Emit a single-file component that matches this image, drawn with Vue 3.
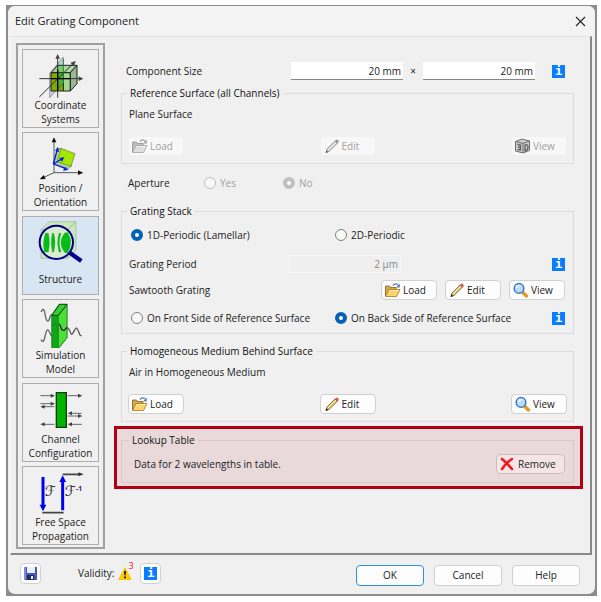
<template>
  <div class="window">
    <div class="dialog">
      <header class="titlebar">
        <span>Edit Grating Component</span>
        <button type="button" class="close" aria-label="Close">
          <svg width="11" height="11" viewBox="0 0 11 11"><path d="M1 1l9 9M10 1l-9 9" stroke="#222" stroke-width="1.1" /></svg>
        </button>
      </header>

      <div class="panel">
        <nav class="sidebar">
          <button v-for="page in pages" :key="page.id" type="button" class="page" :class="{ active: page.id === activePage }" @click="activePage = page.id">
            <svg class="page-icon" viewBox="0 0 144 135">
              <g v-if="page.id === 'coordinate'" fill="none" stroke="#222" stroke-width="3">
                <path d="M38 62L79 12V89L38 134z" fill="#c5cfe4" stroke="#70788c" stroke-width="2" />
                <path d="M79 59L100 59V114H79z" fill="#a5d894" />
                <path d="M42 59H79V114H42z" fill="#86a800" />
                <path d="M62 37L79 36V89L62 108z" fill="#4fae3c" stroke="none" />
                <path d="M42 59L62 37H120L100 59z" fill="#94cf85" fill-opacity=".75" />
                <path d="M100 59L120 37V92L100 114z" fill="#9ab78f" />
                <path d="M79 18V90L62 108" stroke="#1c8d22" stroke-width="3" />
                <path d="M62 134V10M7 77H134M7 132L112 28" stroke="#333" />
                <path d="M62 3l7 14H55zM139 77l-14-7v14zM116 24l-16 5 11 10z" fill="#444" stroke="none" />
                <path d="M42 77H100M62 50V114" stroke="#000" stroke-width="4" />
              </g>
              <g v-else-if="page.id === 'position'" fill="none" stroke="#222" stroke-width="2">
                <path d="M51 110V14M51 110H130M51 110L18 125" stroke="#555" stroke-width="3" />
                <path d="M51 4l7 15H44zM139 110l-16-7v14zM8 130l12-13 6 12z" fill="#111" stroke="none" />
                <path d="M72 37L62 38 50 82 94 98 104 90z" fill="#a8d694" stroke="#657b5a" />
                <path d="M72 37L114 53L102 91L60 77z" fill="#a4e600" stroke="#667c3a" />
                <path d="M49 84L60 43M49 84L74 69M49 84L86 98" stroke="#0018f0" stroke-width="4" />
                <path d="M63 32l3 16-12-4zM82 64L75 77l-8-11zM94 102l-16 2 6-11z" fill="#0018f0" stroke="none" />
              </g>
              <g v-else-if="page.id === 'structure'" fill="none">
                <path d="M12 29L36 5H117V90L92 115H12z" fill="#cde5bb" stroke="#9fb890" stroke-width="2" />
                <path d="M92 29H12M92 29L117 5M92 29V115" stroke="#8ea583" stroke-width="2" />
                <circle cx="58" cy="67" r="48" fill="#dcefd2" fill-opacity=".85" />
                <path d="M25 40H34Q40 68 34 96H22Q16 68 25 40zM46 40H50Q58 67 50 96H46Q40 67 46 40zM66 40H72Q62 68 72 96H66Q58 68 66 40zM84 38H92Q110 66 92 98H84Q60 68 84 38z" fill="#06bd18" stroke="#16962a" stroke-width="1" />
                <circle cx="58" cy="67" r="50" stroke="#00008b" stroke-width="6" />
                <path d="M96 97L133 123" stroke="#00008b" stroke-width="13" />
              </g>
              <g v-else-if="page.id === 'simulation'" fill="none">
                <path d="M12 27C20 12 22 20 25 38S34 60 38 45 46 36 52 40M12 110C20 124 22 108 26 92S34 78 39 91 46 94 50 96" stroke="#666" stroke-width="4" />
                <path d="M44 36L66 4H90V104L64 137H44z" fill="#11a51b" stroke="#176819" stroke-width="2" />
                <path d="M64 38L90 5V104L64 137z" fill="#4be036" stroke="#17741b" stroke-width="2" />
                <path d="M44 37H64L90 4H68z" fill="#39cf30" stroke="#104712" stroke-width="3" />
                <path d="M48 68Q54 56 60 70T64 84" stroke="#128018" stroke-width="2" />
                <path d="M66 62C73 68 70 82 79 82S89 68 96 79 101 101 109 88 117 68 124 84 128 98 134 98" stroke="#555" stroke-width="4" />
                <path d="M66 62C73 68 70 82 79 82S86 72 90 73" stroke="#111" stroke-width="3" />
              </g>
              <g v-else-if="page.id === 'channel'" fill="none" stroke="#666" stroke-width="3">
                <path d="M58 17H88V121H58z" fill="#00b400" stroke="#173b17" stroke-width="4" />
                <path d="M10 26H48M92 26H130M10 50H48M16 59H52M98 79H134M92 87H130M16 112H52M98 112H134" />
                <path d="M54 26l-13-6v12zM136 26l-13-6v12zM54 50l-13-6v12zM10 59l13-6v12zM92 79l13-6v12zM136 87l-13-6v12zM10 112l13-6v12zM92 112l13-6v12z" fill="#444" stroke="none" />
              </g>
              <g v-else fill="none">
                <path d="M18 21V112M77 121V28" stroke="#0000f0" stroke-width="9" />
                <path d="M18 124l-10-20h20zM77 16L67 36h20z" fill="#0000f0" />
                <path d="M16 128H80M77 13H130" stroke="#444" stroke-width="5" />
                <path d="M140 13l-16-6v12z" fill="#333" />
                <text x="23" y="77" class="fourier">ℱ</text>
                <text x="83" y="77" class="fourier">ℱ</text>
                <text x="117" y="62" class="power">-1</text>
              </g>
            </svg>
            <span class="page-label">{{ page.label }}</span>
          </button>
        </nav>

        <main class="content">
          <div class="row size-row">
            <label for="size-x" class="size-label">Component Size</label>
            <input id="size-x" v-model="sizeX" type="text" class="field" />
            <span class="times">×</span>
            <input v-model="sizeY" type="text" class="field" aria-label="Component size Y" />
            <button type="button" class="info" aria-label="Info">i</button>
          </div>

          <fieldset class="group">
            <legend>Reference Surface (all Channels)</legend>
            <p class="medium">Plane Surface</p>
            <div class="buttons spread">
              <button v-for="tool in surfaceTools" :key="tool.icon" type="button" class="tool" disabled>
                <svg width="17" height="16" viewBox="0 0 17 16"><use :href="'#' + tool.icon" /></svg>{{ tool.label }}
              </button>
            </div>
          </fieldset>

          <div class="row aperture-row">
            <span class="aperture-label">Aperture</span>
            <label class="radio disabled"><input v-model="aperture" type="radio" name="aperture" value="yes" disabled />Yes</label>
            <label class="radio disabled"><input v-model="aperture" type="radio" name="aperture" value="no" disabled />No</label>
          </div>

          <fieldset class="group stack">
            <legend>Grating Stack</legend>
            <div class="choices">
              <label class="radio"><input v-model="periodicity" type="radio" name="periodicity" value="1d" />1D-Periodic (Lamellar)</label>
              <label class="radio"><input v-model="periodicity" type="radio" name="periodicity" value="2d" />2D-Periodic</label>
            </div>
            <div class="row period-row">
              <label for="period" class="period-label">Grating Period</label>
              <input id="period" type="text" class="field" value="2 µm" disabled />
              <button type="button" class="info" aria-label="Info">i</button>
            </div>
            <div class="row grating-row">
              <span>Sawtooth Grating</span>
              <div class="buttons">
                <button v-for="tool in tools" :key="tool.icon" type="button" class="tool">
                  <svg width="17" height="16" viewBox="0 0 17 16"><use :href="'#' + tool.icon" /></svg>{{ tool.label }}
                </button>
              </div>
            </div>
            <div class="choices side-row">
              <label class="radio"><input v-model="side" type="radio" name="side" value="front" />On Front Side of Reference Surface</label>
              <label class="radio"><input v-model="side" type="radio" name="side" value="back" />On Back Side of Reference Surface</label>
              <button type="button" class="info" aria-label="Info">i</button>
            </div>
          </fieldset>

          <fieldset class="group">
            <legend>Homogeneous Medium Behind Surface</legend>
            <p class="medium">Air in Homogeneous Medium</p>
            <div class="buttons spread">
              <button v-for="tool in tools" :key="tool.icon" type="button" class="tool">
                <svg width="17" height="16" viewBox="0 0 17 16"><use :href="'#' + tool.icon" /></svg>{{ tool.label }}
              </button>
            </div>
          </fieldset>

          <div class="highlight">
            <fieldset class="group lookup">
              <legend>Lookup Table</legend>
              <div class="row lookup-row">
                <span>Data for 2 wavelengths in table.</span>
                <button type="button" class="tool remove">
                  <svg width="14" height="14" viewBox="0 0 14 14"><path d="M2 2Q7 6 12 12M12 2Q6 6 2 12" fill="none" stroke="#f01818" stroke-width="2.6" stroke-linecap="round" /></svg>Remove
                </button>
              </div>
            </fieldset>
          </div>
        </main>
      </div>

      <footer class="footer">
        <button type="button" class="square" aria-label="Save">
          <svg width="13" height="13" viewBox="0 0 13 13">
            <path d="M0 0H13V13H1L0 12z" fill="#4658bc" />
            <path d="M0 0H2V12H0z" fill="#7c8be0" />
            <path d="M3 0H11V6H3z" fill="#e8efff" />
            <path d="M3 8H10V13H3z" fill="#252c5c" />
            <path d="M7 9H9V12H7z" fill="#eef" />
          </svg>
        </button>
        <span class="validity">Validity:</span>
        <svg class="warning" width="14" height="13" viewBox="0 0 14 13">
          <path d="M7 .8L13.2 12.4H.8z" fill="#ffcc08" stroke="#f5c000" stroke-linejoin="round" />
          <path d="M6 4H8L7.6 8.6H6.4zM6.1 9.6H7.9V11.2H6.1z" fill="#111" />
        </svg>
        <sup class="count">3</sup>
        <button type="button" class="square" aria-label="Info"><span class="info">i</span></button>
        <div class="actions">
          <button type="button" class="action primary">OK</button>
          <button type="button" class="action">Cancel</button>
          <button type="button" class="action">Help</button>
        </div>
      </footer>
    </div>

    <!-- shared button icons -->
    <svg class="symbols" width="0" height="0">
      <symbol id="load" viewBox="0 0 17 16">
        <path d="M1.5 14V4h4l1 1.5H12V8" fill="#d9a744" stroke="#80601f" stroke-width=".8" />
        <path d="M1.5 14.5L5 7.5H16L12.5 14.5z" fill="#fbd56b" stroke="#a67a20" stroke-width=".8" />
        <path d="M5.5 8.5H14.5" stroke="#fff0b4" />
        <path d="M9 3.5Q11.5 0.5 14 3" fill="none" stroke="#5b7fae" stroke-width="1.3" />
        <path d="M15.8 1.5V5.4H12z" fill="#5b7fae" />
      </symbol>
      <symbol id="edit" viewBox="0 0 17 16">
        <path d="M3 14.5L4 11 12 3 14.4 5.2 6.3 13.2z" fill="#dcc474" stroke="#6b5a2c" stroke-width=".8" />
        <path d="M5 12L13 4" stroke="#fff0b0" />
        <path d="M11.6 3.2L13.4 1.6Q16 2 15.8 4L14.4 5.4z" fill="#d05a4c" />
        <path d="M2.6 15L3.4 12.2 5.4 14z" fill="#222" />
      </symbol>
      <symbol id="view" viewBox="0 0 17 16">
        <path d="M10.6 10.2L14.4 14" stroke="#e19a27" stroke-width="3.4" stroke-linecap="round" />
        <circle cx="7" cy="6.4" r="4.8" fill="#b9dcfa" stroke="#3b77c6" stroke-width="1.5" />
        <path d="M4.4 6Q5 3.6 7.6 3.6" fill="none" stroke="#fff" stroke-width="1.3" />
      </symbol>
      <symbol id="view3d" viewBox="0 0 17 16">
        <path d="M1.5 3.5L8 1l7.5 2V12.5L9 15 1.5 13z" fill="#bbb" stroke="#333" />
        <path d="M1.5 3.5L9 5.5 15.5 3M9 5.5V15" fill="none" stroke="#333" />
        <path d="M3.5 6.5L6.5 7V12L3.5 11.5M4 9L6.5 9.5M11 7V13Q14 12 14 9T11 7z" fill="none" stroke="#222" stroke-width="1.3" />
      </symbol>
    </svg>
  </div>
</template>

<script setup>
import { ref } from 'vue';

const pages = [
  { id: 'coordinate', label: 'Coordinate Systems' },
  { id: 'position', label: 'Position / Orientation' },
  { id: 'structure', label: 'Structure' },
  { id: 'simulation', label: 'Simulation Model' },
  { id: 'channel', label: 'Channel Configuration' },
  { id: 'propagation', label: 'Free Space Propagation' },
];

const tools = [
  { icon: 'load', label: 'Load' },
  { icon: 'edit', label: 'Edit' },
  { icon: 'view', label: 'View' },
];

// The reference surface has a 3D preview instead of the plain one
const surfaceTools = [tools[0], tools[1], { icon: 'view3d', label: 'View' }];

const activePage = ref('structure');
const sizeX = ref('20 mm');
const sizeY = ref('20 mm');
const aperture = ref('no');
const periodicity = ref('1d');
const side = ref('back');
</script>

<style>
body {
  background: #fff;
}
</style>

<style scoped>
* {
  box-sizing: border-box;
}

.window {
  margin: 5px 4px 0 6px;
  padding: 1px 2px 2px 2px;
  background: #8c8c8c;
  color: #222;
  font-family: "Open Sans", "Noto Sans", sans-serif;
  font-size: 10px;
  line-height: 14px;
}

.dialog {
  background: #f0f0f0;
  border-radius: 7px;
  overflow: hidden;
}

button,
input {
  font: inherit;
  color: inherit;
}

.titlebar {
  display: flex;
  align-items: center;
  justify-content: space-between;
  height: 30px;
  padding: 0 6px 0 7px;
  background: #f3f3f3;
  font-size: 11px;
}

.close {
  display: flex;
  padding: 3px;
  border: 0;
  background: none;
}

/* sunken page area */
.panel {
  display: flex;
  align-items: stretch;
  margin: 0 3px 0 2px;
  padding: 6px 7px 4px 5px;
  border: 1px solid #fafafa;
  border-top-color: #e2e2e2;
  border-right: 2px solid #898989;
  border-bottom: 2px solid #898989;
}

.sidebar {
  display: flex;
  flex-direction: column;
  justify-content: space-between;
  flex: none;
  width: 89px;
  min-height: 506px;
  padding: 4px 4px 2px;
  border: 2px solid #a0a0a0;
}

.page {
  display: flex;
  flex-direction: column;
  align-items: center;
  width: 100%;
  height: 79px;
  padding: 3px 0 1px;
  border: 1px solid #adadad;
  background: #f0f0f0;
}

.page.active {
  background: #d8e5f3;
}

.page-icon {
  flex: none;
  width: 48px;
  height: 45px;
}

.page-label {
  display: flex;
  align-items: center;
  justify-content: center;
  width: 72px;
  height: 28px;
}

.fourier {
  fill: #222;
  font-family: "DejaVu Sans", sans-serif;
  font-size: 42px;
}

.power {
  fill: #222270;
  font-size: 20px;
  font-weight: 700;
}

.content {
  flex: 1;
  min-width: 0;
  padding: 18px 0 0 9px;
}

.row {
  display: flex;
  align-items: center;
}

.size-row {
  height: 20px;
  margin-bottom: 4px;
  padding: 0 18px 0 12px;
}

.size-label {
  width: 165px;
}

.field {
  flex: 0 1 112px;
  min-width: 0;
  height: 18px;
  padding: 0 2px;
  border: 0;
  border-bottom: 1px solid #868686;
  background: #fff;
  text-align: right;
}

.field:disabled {
  border: 1px solid #f7f7f7;
  background: #efefef;
  color: #888;
}

.times {
  width: 20px;
  text-align: center;
}

.info {
  display: flex;
  align-items: center;
  justify-content: center;
  flex: none;
  width: 13px;
  height: 13px;
  margin-left: auto;
  padding: 0;
  border: 0;
  background: #0a7cff;
  color: #fff;
  font-family: "DejaVu Sans Mono", monospace;
  font-size: 12px;
  font-weight: 700;
  line-height: 13px;
}

.group {
  min-width: 0;
  margin: 0 9px 9px 7px;
  padding: 0 6px 7px;
  border: 1px solid #dcdcdc;
}

.group legend {
  height: 16px;
  margin-left: -1px;
  padding: 0 3px;
  line-height: 16px;
  color: #111;
}

.medium {
  margin: 6px 0 15px 1px;
}

.buttons {
  display: flex;
  gap: 8px;
}

.spread {
  justify-content: space-between;
}

.tool {
  display: flex;
  align-items: center;
  gap: 2px;
  width: 56px;
  height: 20px;
  padding: 0 2px;
  border: 1px solid #d0d0d0;
  border-radius: 4px;
  background: #fdfdfd;
  white-space: nowrap;
}

.tool:disabled {
  border-color: #f0f0f0;
  background: #f8f8f8;
  color: #a0a0a0;
}

.tool:disabled svg {
  filter: grayscale(1);
  opacity: 0.7;
}

.aperture-row {
  height: 20px;
  margin-bottom: 10px;
  padding-left: 14px;
}

.aperture-label {
  width: 76px;
}

.aperture-row .radio {
  width: 79px;
}

.radio {
  display: flex;
  align-items: center;
  gap: 4px;
  white-space: nowrap;
}

.radio input {
  appearance: none;
  flex: none;
  width: 12px;
  height: 12px;
  margin: 0;
  border: 1px solid #808080;
  border-radius: 50%;
  background: #f8f8f8;
}

.radio input:checked {
  border: 4px solid #0560b8;
  background: #fff;
}

.radio.disabled {
  color: #a0a0a0;
}

.radio.disabled input {
  border-color: #c0c0c0;
}

.stack {
  padding-right: 8px;
}

.choices {
  display: grid;
  grid-template-columns: 47% 1fr auto;
  align-items: center;
  height: 20px;
  margin-top: 6px;
  padding-left: 3px;
}

.period-row {
  height: 20px;
  margin-top: 9px;
  padding-left: 1px;
}

.period-label {
  width: 160px;
}

.grating-row {
  justify-content: space-between;
  margin-top: 6px;
  padding-left: 1px;
}

.side-row {
  margin-top: 8px;
  margin-bottom: -2px;
}

.highlight {
  margin-top: -5px;
  padding: 3px 6px 3px 4px;
  border: 3px solid #b00014;
  background: #e9d9da;
}

.lookup {
  margin: 0;
  padding: 0 8px 8px;
  border-color: #d8c8c9;
}

.lookup-row {
  justify-content: space-between;
  padding: 6px 0 0 4px;
}

.remove {
  gap: 4px;
  width: 69px;
  padding: 0 3px;
  border-color: #cdbcbd;
  background: #f5e5e6;
}

.footer {
  display: flex;
  align-items: center;
  height: 39px;
  padding: 0 15px 3px 12px;
}

.square {
  display: flex;
  align-items: center;
  justify-content: center;
  width: 21px;
  height: 21px;
  padding: 0;
  border: 1px solid #d0d0d0;
  border-radius: 4px;
  background: #fdfdfd;
}

.square .info {
  margin: 0;
}

.validity {
  margin: 0 4px 0 37px;
}

.count {
  align-self: flex-start;
  width: 12px;
  margin: 4px 0 0 -4px;
  color: #f02020;
  font-size: 9px;
  line-height: 14px;
}

.actions {
  display: flex;
  gap: 10px;
  margin: 4px 0 0 auto;
}

.action {
  width: 68px;
  height: 21px;
  padding: 0;
  border: 1px solid #d0d0d0;
  border-radius: 4px;
  background: #fdfdfd;
}

.action.primary {
  border: 1px solid #2d8fdf;
}

.symbols {
  position: absolute;
}
</style>
